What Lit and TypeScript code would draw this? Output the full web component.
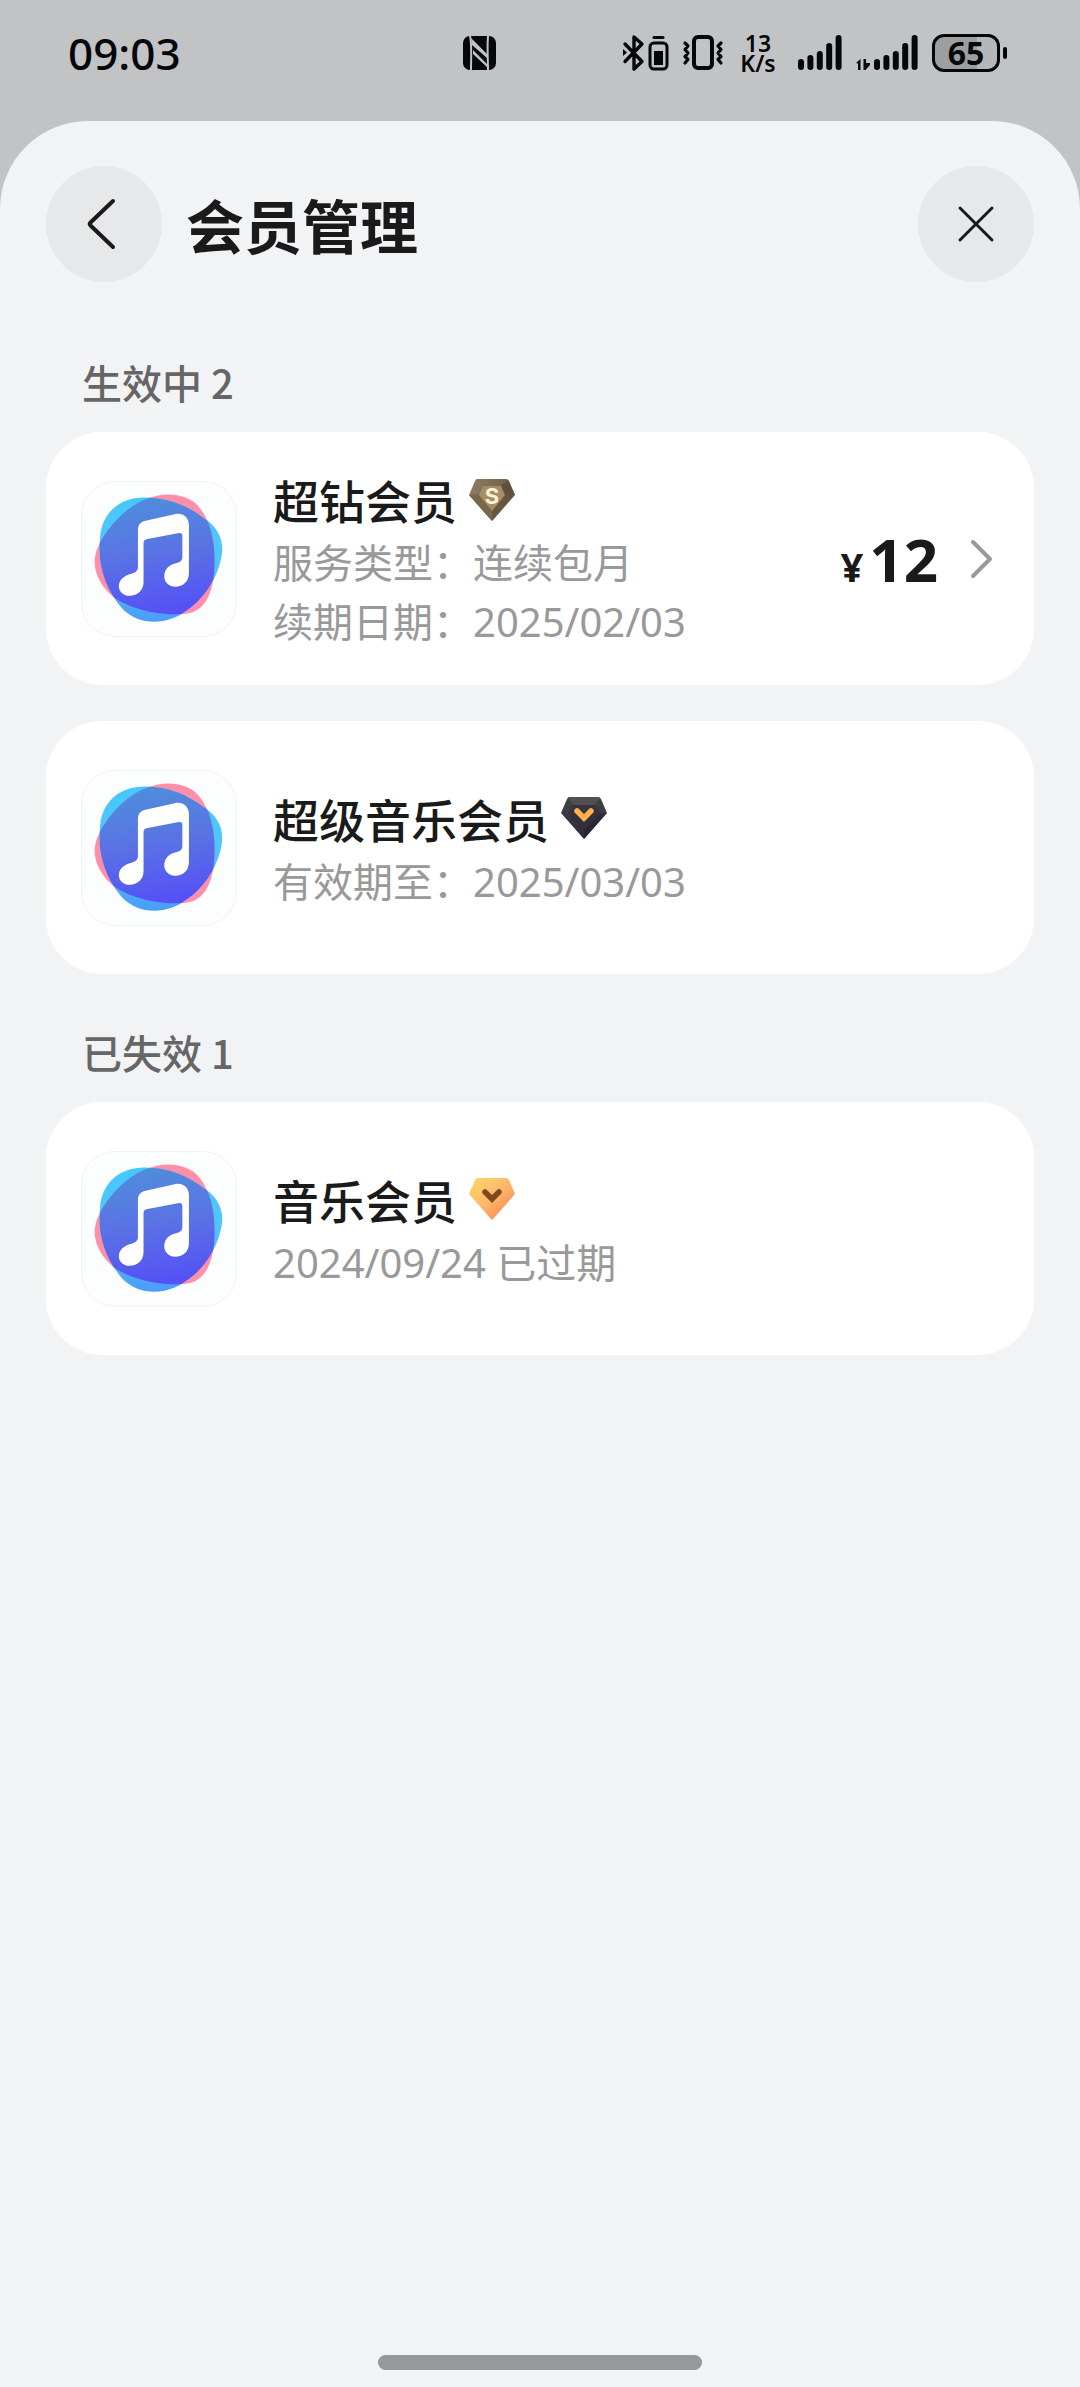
import { LitElement, html, svg, css, nothing } from "lit";
import { customElement, property } from "lit/decorators.js";

type Tier = "super" | "premium" | "basic";

interface Membership {
  name: string;
  tier: Tier;
  details: string[];
  price?: string;
}

const ACTIVE: Membership[] = [
  {
    name: "超钻会员",
    tier: "super",
    details: ["服务类型：连续包月", "续期日期：2025/02/03"],
    price: "12",
  },
  { name: "超级音乐会员", tier: "premium", details: ["有效期至：2025/03/03"] },
];

const EXPIRED: Membership[] = [
  { name: "音乐会员", tier: "basic", details: ["2024/09/24 已过期"] },
];

const FONT = css`"Noto Sans", "Noto Sans CJK SC", sans-serif`;
const HEADING_FONT = css`"Noto Sans CJK SC", "Noto Sans", sans-serif`;

/** Status bar: clock, NFC mark, radios and battery. */
@customElement("status-bar")
export class StatusBar extends LitElement {
  static styles = css`
    :host {
      display: flex;
      align-items: center;
      height: 121px;
      padding: 0 72px 16px 68px;
      box-sizing: border-box;
      font-family: ${FONT};
      color: #060708;
    }
    svg {
      display: block;
      flex: none;
    }
    .clock {
      font-size: 44px;
      line-height: 56px;
      font-weight: 500;
    }
    .nfc {
      margin-left: auto;
      margin-right: 126px;
    }
    .radios {
      display: flex;
      align-items: center;
    }
    .vibrate {
      margin-left: 12px;
    }
    .rate {
      width: 40px;
      margin: 0 20px 0 14px;
      font-size: 23px;
      line-height: 20px;
      font-weight: 600;
      text-align: center;
    }
    .second {
      margin-left: 14px;
    }
    .battery {
      position: relative;
      display: flex;
      align-items: center;
      justify-content: center;
      width: 68px;
      height: 38px;
      margin-left: 14px;
      margin-right: 8px;
      box-sizing: border-box;
      border: 3px solid #060708;
      border-radius: 12px;
      background: linear-gradient(90deg, #9d9ea0 68%, #b6b7b9 68%);
      font-size: 32px;
      line-height: 32px;
      font-weight: 700;
    }
    .battery::after {
      content: "";
      position: absolute;
      right: -10px;
      top: 10px;
      width: 4px;
      height: 12px;
      border-radius: 2px;
      background: #060708;
    }
  `;

  private bars() {
    return [24, 20, 16, 8, 0].map(
      (top, i) => svg`<rect x=${i * 9.4} y=${top} width="6" height=${35 - top} rx="3" />`,
    );
  }

  render() {
    return html`
      <time class="clock">09:03</time>
      <svg class="nfc" width="33" height="34" viewBox="0 0 33 34" role="img" aria-label="NFC">
        <rect width="33" height="34" rx="7" fill="#060708" />
        <path
          d="M7 0C9 8 8 24 8 34M25 0C24 10 25 24 25 34"
          fill="none"
          stroke="#c2c3c5"
          stroke-width="2"
        />
        <path d="M8 2L24 18V22L9 9ZM10 14L25 29V32L10 18Z" fill="#c2c3c5" />
      </svg>
      <div class="radios">
        <svg width="48" height="38" viewBox="0 0 48 38" role="img" aria-label="蓝牙">
          <g fill="none" stroke="#060708" stroke-width="3.400" stroke-linejoin="round" stroke-linecap="round">
            <path d="M3 10L20 27.500L12 35V3L20 10L3 27.500" />
            <rect x="28" y="9" width="17" height="26" rx="4" stroke-width="3" />
            <path d="M32 3.500H41" stroke-width="3" />
          </g>
          <path d="M1 15L5 18.500L1 22Z" fill="#060708" />
          <rect x="32" y="17" width="9" height="14" fill="#060708" />
        </svg>
        <svg class="vibrate" width="42" height="36" viewBox="0 0 42 36" role="img" aria-label="振动">
          <g fill="none" stroke="#060708" stroke-linejoin="round" stroke-linecap="round">
            <rect x="12" y="2" width="18" height="31" rx="4" stroke-width="4" />
            <path d="M3 8L6 11L3 14.500L6 18L3 21.500L6 24.500L3 28M39 8L36 11L39 14.500L36 18L39 21.500L36 24.500L39 28" stroke-width="3.200" />
          </g>
        </svg>
        <div class="rate">13 K/s</div>
        <svg width="44" height="35" viewBox="0 0 44 35" fill="#060708" role="img" aria-label="卡1信号">
          ${this.bars()}
        </svg>
        <svg class="second" width="62" height="35" viewBox="0 0 62 35" fill="#060708" role="img" aria-label="卡2信号">
          <path d="M0 28L4.500 24V35H2V28.500ZM7.500 24H10V28H14V30L9.500 35H7.500Z" />
          <g transform="translate(18 0)">${this.bars()}</g>
        </svg>
        <div class="battery">65</div>
      </div>
    `;
  }
}

/** App icon of the music service. */
@customElement("music-logo")
export class MusicLogo extends LitElement {
  static styles = css`
    :host {
      display: block;
      flex: none;
      width: 156px;
      height: 156px;
      box-sizing: border-box;
      border: 1px solid #f1f2f2;
      border-radius: 34px;
      background: #fcfdfd;
      overflow: hidden;
    }
    svg {
      display: block;
      width: 100%;
      height: 100%;
    }
  `;

  render() {
    return html`
      <svg viewBox="5 33 468 468" role="img" aria-label="音乐">
        <defs>
          <linearGradient id="cool" x1="0" y1="0" x2="0" y2="1">
            <stop offset="0" stop-color="#45c8fd" />
            <stop offset="0.500" stop-color="#55c4ff" />
            <stop offset="1" stop-color="#4a9dfa" />
          </linearGradient>
          <linearGradient id="core" x1="0.400" y1="0" x2="0.550" y2="1">
            <stop offset="0" stop-color="#4e8fdb" />
            <stop offset="0.500" stop-color="#5a72e4" />
            <stop offset="1" stop-color="#5550f6" />
          </linearGradient>
          <clipPath id="blob">
            <path d="M60 200C66 125 120 80 195 80C270 80 330 108 375 143C420 170 440 215 428 265C415 330 370 395 320 425C270 465 180 475 125 415C80 360 50 290 60 200Z" />
          </clipPath>
        </defs>
        <path fill="#ff8fa9" d="M200 85C250 62 325 65 360 108C395 150 408 210 408 270C408 340 395 400 350 425C310 445 200 435 130 400C75 375 35 310 45 260C55 200 130 110 200 85Z" />
        <path fill="url(#cool)" d="M60 200C66 125 120 80 195 80C270 80 330 108 375 143C420 170 440 215 428 265C415 330 370 395 320 425C270 465 180 475 125 415C80 360 50 290 60 200Z" />
        <path clip-path="url(#blob)" fill="url(#core)" d="M200 85C250 62 325 65 360 108C395 150 408 210 408 270C408 340 395 400 350 425C310 445 200 435 130 400C75 375 35 310 45 260C55 200 130 110 200 85Z" />
        <path fill="#fff" d="M192 217Q192 209 200 207L300 188Q310 187 310 198L310 262C310 274 300 278 288 281C268 286 255 300 255 320C255 338 270 351 288 351C312 351 330 335 330 310L330 165C330 140 312 127 290 130L198 151C182 155 175 164 175 180L175 292C175 304 166 309 150 313C130 319 117 332 117 350C117 368 132 379 150 379C174 379 192 362 192 338Z" />
      </svg>
    `;
  }
}

/** Gem shown after a membership name; colour and mark depend on the tier. */
@customElement("tier-gem")
export class TierGem extends LitElement {
  @property() tier: Tier = "basic";

  static styles = css`
    :host {
      display: block;
      flex: none;
    }
    svg {
      display: block;
    }
    .mark {
      font: 700 22px Inter, sans-serif;
    }
  `;

  private face() {
    if (this.tier === "super") {
      return svg`
        <path fill="url(#bronze)" d="M8 0H37Q39 0 40 2L46 16L24 41Q23 42 22 41L0 16L6 2Q7 0 8 0Z" />
        <path fill="#60503f" d="M39 1L46 16L35 15L32 7Z" />
        <path fill="#5e4d37" d="M35 15H46L23 42V31Z" opacity="0.650" />
        <path fill="#7a6747" d="M0 16L11 15L23 31V42Z" />
        <path fill="#a48e69" d="M14 7H32L36 16L23 32L10 16Z" />
        <text class="mark" x="23" y="25" text-anchor="middle" fill="#fff0d2">S</text>`;
    }
    if (this.tier === "premium") {
      return svg`
        <path fill="url(#night)" d="M8 0H37Q39 0 40 2L46 16L24 41Q23 42 22 41L0 16L6 2Q7 0 8 0Z" />
        <path fill="#6c6766" d="M7 0H39L34 8H12Z" opacity="0.400" />
        <path fill="#302c31" d="M12 8H34L39 17L23 33L7 17Z" opacity="0.500" />
        <path fill="#1e1c28" d="M39 17L46 16L23 42V33Z" opacity="0.450" />
        <path d="M16 14L23 21L30 14" fill="none" stroke="#ffae50" stroke-width="5.500" stroke-linecap="round" />`;
    }
    return svg`
      <path fill="url(#amber)" d="M8 0H37Q39 0 40 2L46 16L24 41Q23 42 22 41L0 16L6 2Q7 0 8 0Z" />
      <path fill="#ff9d62" d="M36 15L46 16L23 42Z" opacity="0.350" />
      <path d="M16 14L23 21L30 14" fill="none" stroke="#80481f" stroke-width="5.500" stroke-linecap="round" />`;
  }

  render() {
    return html`
      <svg width="46" height="42" viewBox="0 0 46 42" aria-hidden="true">
        <defs>
          <linearGradient id="bronze" x1="0" y1="0" x2="1" y2="0">
            <stop offset="0" stop-color="#8e7d63" />
            <stop offset="1" stop-color="#6f5d46" />
          </linearGradient>
          <linearGradient id="night" x1="0" y1="0" x2="0" y2="1">
            <stop offset="0" stop-color="#454246" />
            <stop offset="1" stop-color="#2c2940" />
          </linearGradient>
          <linearGradient id="amber" x1="0" y1="0" x2="1" y2="1">
            <stop offset="0" stop-color="#ffd967" />
            <stop offset="0.500" stop-color="#fdb768" />
            <stop offset="1" stop-color="#fb7d4e" />
          </linearGradient>
        </defs>
        ${this.face()}
      </svg>
    `;
  }
}

/** One membership; becomes a link when it has a renewal price. */
@customElement("membership-card")
export class MembershipCard extends LitElement {
  @property({ attribute: false }) item!: Membership;

  static styles = css`
    :host {
      display: block;
      font-family: ${FONT};
    }
    .card {
      display: flex;
      align-items: center;
      gap: 36px;
      min-height: 253px;
      padding: 34px 36px 34px 35px;
      box-sizing: border-box;
      border-radius: 56px;
      background: #fff;
      color: #1a1a1a;
      text-decoration: none;
    }
    .info {
      flex: 1;
      min-width: 0;
    }
    .name {
      display: flex;
      align-items: center;
      gap: 12px;
      margin: 0;
      font-family: ${HEADING_FONT};
      font-size: 46px;
      line-height: 67px;
      font-weight: 500;
    }
    .detail {
      margin: 0;
      font-size: 40px;
      line-height: 59px;
      color: #999;
    }
    .renewal {
      display: flex;
      align-items: center;
      gap: 28px;
    }
    .price {
      display: flex;
      align-items: baseline;
      gap: 6px;
      padding-top: 8px;
      font-size: 60px;
      line-height: 72px;
      font-weight: 700;
    }
    .currency {
      font-size: 40px;
    }
    .arrow {
      display: block;
      flex: none;
    }
  `;

  private body() {
    const { name, tier, details, price } = this.item;
    return html`
      <music-logo></music-logo>
      <div class="info">
        <h3 class="name">${name}<tier-gem .tier=${tier}></tier-gem></h3>
        ${details.map((line) => html`<p class="detail">${line}</p>`)}
      </div>
      ${price
        ? html`
            <div class="renewal">
              <span class="price"><span class="currency">¥</span>${price}</span>
              <svg class="arrow" width="32" height="40" viewBox="0 0 32 40" aria-hidden="true">
                <path d="M7 3L24 20L7 37" fill="none" stroke="#999" stroke-width="4" stroke-linecap="round" stroke-linejoin="round" />
              </svg>
            </div>
          `
        : nothing}
    `;
  }

  render() {
    return this.item.price
      ? html`<a class="card" href="#renewal">${this.body()}</a>`
      : html`<div class="card">${this.body()}</div>`;
  }
}

@customElement("app-root")
export class AppRoot extends LitElement {
  static styles = css`
    :host {
      display: flex;
      flex-direction: column;
      min-height: 100vh;
      background: #c2c3c5;
      font-family: ${HEADING_FONT};
    }
    .sheet {
      flex: 1;
      display: flex;
      flex-direction: column;
      padding: 45px 46px 17px;
      border-radius: 88px 88px 0 0;
      background: #f2f3f5;
    }
    .header {
      display: flex;
      align-items: center;
      gap: 24px;
      margin-bottom: 22px;
    }
    .title {
      flex: 1;
      margin: 0;
      font-size: 58px;
      line-height: 80px;
      font-weight: 700;
      color: #1a1a1a;
    }
    .round {
      display: flex;
      align-items: center;
      justify-content: center;
      width: 116px;
      height: 116px;
      padding: 0;
      border: 0;
      border-radius: 50%;
      background: #e7e8ea;
    }
    .label {
      margin: 48px 36px 20px;
      font-size: 40px;
      line-height: 60px;
      font-weight: 500;
      color: #666;
    }
    .list {
      display: flex;
      flex-direction: column;
      gap: 36px;
      margin: 0;
      padding: 0;
      list-style: none;
    }
    .home {
      width: 324px;
      height: 15px;
      margin: auto auto 0;
      border-radius: 8px;
      background: #979899;
    }
  `;

  private section(label: string, items: Membership[]) {
    return html`
      <section>
        <h2 class="label">${label} ${items.length}</h2>
        <ul class="list">
          ${items.map((item) => html`<li><membership-card .item=${item}></membership-card></li>`)}
        </ul>
      </section>
    `;
  }

  render() {
    return html`
      <status-bar></status-bar>
      <main class="sheet">
        <header class="header">
          <button class="round" type="button" aria-label="返回">
            <svg width="54" height="54" viewBox="0 0 54 54" aria-hidden="true">
              <path d="M36 4L13.500 25.500Q12 27 13.500 28.500L36 50" fill="none" stroke="#1a1a1a" stroke-width="4" stroke-linecap="round" />
            </svg>
          </button>
          <h1 class="title">会员管理</h1>
          <button class="round" type="button" aria-label="关闭">
            <svg width="40" height="40" viewBox="0 0 40 40" aria-hidden="true">
              <path d="M4 4L36 36M36 4L4 36" fill="none" stroke="#1a1a1a" stroke-width="3" stroke-linecap="round" />
            </svg>
          </button>
        </header>
        ${this.section("生效中", ACTIVE)} ${this.section("已失效", EXPIRED)}
        <div class="home"></div>
      </main>
    `;
  }
}
